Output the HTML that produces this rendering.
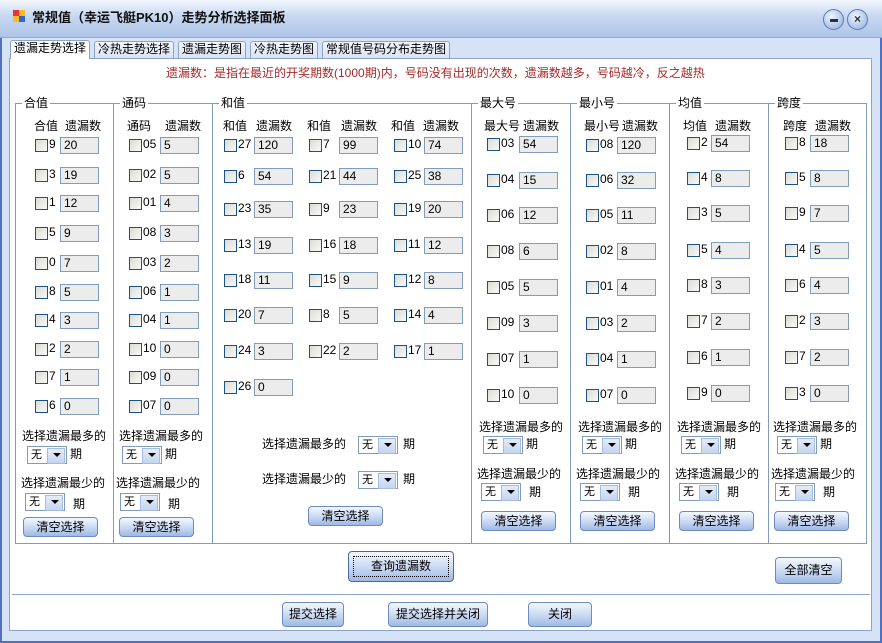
<!DOCTYPE html>
<html><head><meta charset="utf-8"><style>
*{margin:0;padding:0;box-sizing:border-box}
body{width:882px;height:643px;overflow:hidden;background:#d5e1f5;font-family:"Liberation Sans","Noto Sans CJK SC",sans-serif;font-size:12px;color:#000;position:relative}
.a{position:absolute;white-space:nowrap;line-height:14px}
#win{position:absolute;left:0;top:0;width:882px;height:643px;border:2px solid #4f71c0;border-top:none;background:#d6e2f6}
#title{position:absolute;left:0;top:0;width:882px;height:38px;background:linear-gradient(#f2f6fd,#c7d7f0 45%,#aec4e8);border-bottom:1px solid #8eaad8}
#panel{position:absolute;left:9px;top:58px;width:863px;height:573px;background:#fff;border:1px solid #8ba3c9}
.tab{position:absolute;top:41px;height:17px;border:1px solid #8ba3c9;border-bottom:none;background:linear-gradient(#f3f6fb,#d9e3f2);font-size:12px;line-height:15px;padding:0 3px;border-radius:3px 3px 0 0}
.g{position:absolute;top:103px;height:441px;border:1px solid #7f9db9}
.gt{position:absolute;top:-8px;left:6px;background:#fff;padding:0 2px;line-height:15px}
.r{position:absolute;height:17px}
.r i{position:absolute;left:0;top:2px;width:13px;height:13px;border:1px solid #1c5180;background:linear-gradient(135deg,#dcdcd6,#f8f8f6)}
.r b{position:absolute;left:14px;top:0;font-weight:normal;line-height:14px}
.r u{position:absolute;top:0;height:17px;text-decoration:none;border:1px solid #7f9db9;background:#ececec;padding-left:3px;line-height:15px;width:39px}
.dd{position:absolute;width:40px;height:18px;border:1px solid #7f9db9;background:#fff;font-size:11px;line-height:16px;padding-left:3px}
.dd:after{content:"";position:absolute;right:1px;top:1px;width:16px;height:14px;background:linear-gradient(#e4ecf9,#c4d5f1);border:1px solid #a6bbe0}
.dd:before{content:"";position:absolute;right:5px;top:6px;border:4px solid transparent;border-top:4px solid #000;z-index:2}
.bt{position:absolute;height:20px;border:1px solid #6e8bbf;border-radius:4px;background:linear-gradient(#f4f8fe,#c8d8f2 55%,#9fb9e3);text-align:center;line-height:18px}
.wb{position:absolute;top:9px;width:21px;height:21px;border-radius:50%;background:radial-gradient(circle at 40% 35%,#f0f5fd,#8fabdc);border:1px solid #5a7bbd;text-align:center;font-weight:bold;line-height:19px;color:#234}
</style></head><body>
<div id="win"></div>
<div id="title">
<div style="position:absolute;left:13px;top:10px;width:6px;height:6px;background:#e33"></div>
<div style="position:absolute;left:19px;top:10px;width:6px;height:6px;background:#fb2"></div>
<div style="position:absolute;left:13px;top:16px;width:6px;height:6px;background:#fb2"></div>
<div style="position:absolute;left:19px;top:16px;width:6px;height:6px;background:#36c"></div>
<div class="a" style="left:32px;top:11px;font-weight:bold;font-size:13px;color:#111">常规值（幸运飞艇PK10）走势分析选择面板</div>
<div class="wb" style="left:823px"><span style="position:absolute;left:6px;top:9px;width:8px;height:3px;background:#234"></span></div>
<div class="wb" style="left:847px">×</div>
</div>
<div class="tab" style="left:10px;top:40px;height:19px;background:#fff;z-index:2">遗漏走势选择</div>
<div class="tab" style="left:94px">冷热走势选择</div>
<div class="tab" style="left:178px">遗漏走势图</div>
<div class="tab" style="left:250px">冷热走势图</div>
<div class="tab" style="left:322px">常规值号码分布走势图</div>
<div id="panel"></div>
<div class="a" style="left:166px;top:66px;color:#a52a2a">遗漏数：是指在最近的开奖期数(1000期)内，号码没有出现的次数，遗漏数越多，号码越冷，反之越热</div>

<div class="g" style="left:15px;width:99px"><div class="gt">合值</div></div>
<div class="g" style="left:113px;width:100px"><div class="gt">通码</div></div>
<div class="g" style="left:212px;width:260px"><div class="gt">和值</div></div>
<div class="g" style="left:471px;width:100px"><div class="gt">最大号</div></div>
<div class="g" style="left:570px;width:100px"><div class="gt">最小号</div></div>
<div class="g" style="left:669px;width:100px"><div class="gt">均值</div></div>
<div class="g" style="left:768px;width:99px"><div class="gt">跨度</div></div>

<div class="a" style="left:34px;top:119px">合值</div><div class="a" style="left:65px;top:119px">遗漏数</div>
<div class="a" style="left:127px;top:119px">通码</div><div class="a" style="left:165px;top:119px">遗漏数</div>
<div class="a" style="left:223px;top:119px">和值</div><div class="a" style="left:256px;top:119px">遗漏数</div>
<div class="a" style="left:307px;top:119px">和值</div><div class="a" style="left:341px;top:119px">遗漏数</div>
<div class="a" style="left:391px;top:119px">和值</div><div class="a" style="left:423px;top:119px">遗漏数</div>
<div class="a" style="left:484px;top:119px">最大号</div><div class="a" style="left:523px;top:119px">遗漏数</div>
<div class="a" style="left:584px;top:119px">最小号</div><div class="a" style="left:622px;top:119px">遗漏数</div>
<div class="a" style="left:683px;top:119px">均值</div><div class="a" style="left:715px;top:119px">遗漏数</div>
<div class="a" style="left:783px;top:119px">跨度</div><div class="a" style="left:815px;top:119px">遗漏数</div>

<div class="r" style="left:35px;top:137px"><i></i><b>9</b><u style="left:25px">20</u></div>
<div class="r" style="left:35px;top:167px"><i></i><b>3</b><u style="left:25px">19</u></div>
<div class="r" style="left:35px;top:195px"><i></i><b>1</b><u style="left:25px">12</u></div>
<div class="r" style="left:35px;top:225px"><i></i><b>5</b><u style="left:25px">9</u></div>
<div class="r" style="left:35px;top:255px"><i></i><b>0</b><u style="left:25px">7</u></div>
<div class="r" style="left:35px;top:284px"><i></i><b>8</b><u style="left:25px">5</u></div>
<div class="r" style="left:35px;top:312px"><i></i><b>4</b><u style="left:25px">3</u></div>
<div class="r" style="left:35px;top:341px"><i></i><b>2</b><u style="left:25px">2</u></div>
<div class="r" style="left:35px;top:369px"><i></i><b>7</b><u style="left:25px">1</u></div>
<div class="r" style="left:35px;top:398px"><i></i><b>6</b><u style="left:25px">0</u></div>
<div class="r" style="left:129px;top:137px"><i></i><b>05</b><u style="left:31px">5</u></div>
<div class="r" style="left:129px;top:167px"><i></i><b>02</b><u style="left:31px">5</u></div>
<div class="r" style="left:129px;top:195px"><i></i><b>01</b><u style="left:31px">4</u></div>
<div class="r" style="left:129px;top:225px"><i></i><b>08</b><u style="left:31px">3</u></div>
<div class="r" style="left:129px;top:255px"><i></i><b>03</b><u style="left:31px">2</u></div>
<div class="r" style="left:129px;top:284px"><i></i><b>06</b><u style="left:31px">1</u></div>
<div class="r" style="left:129px;top:312px"><i></i><b>04</b><u style="left:31px">1</u></div>
<div class="r" style="left:129px;top:341px"><i></i><b>10</b><u style="left:31px">0</u></div>
<div class="r" style="left:129px;top:369px"><i></i><b>09</b><u style="left:31px">0</u></div>
<div class="r" style="left:129px;top:398px"><i></i><b>07</b><u style="left:31px">0</u></div>
<div class="r" style="left:224px;top:137px"><i></i><b>27</b><u style="left:30px">120</u></div>
<div class="r" style="left:224px;top:168px"><i></i><b>6</b><u style="left:30px">54</u></div>
<div class="r" style="left:224px;top:201px"><i></i><b>23</b><u style="left:30px">35</u></div>
<div class="r" style="left:224px;top:237px"><i></i><b>13</b><u style="left:30px">19</u></div>
<div class="r" style="left:224px;top:272px"><i></i><b>18</b><u style="left:30px">11</u></div>
<div class="r" style="left:224px;top:307px"><i></i><b>20</b><u style="left:30px">7</u></div>
<div class="r" style="left:224px;top:343px"><i></i><b>24</b><u style="left:30px">3</u></div>
<div class="r" style="left:224px;top:379px"><i></i><b>26</b><u style="left:30px">0</u></div>
<div class="r" style="left:309px;top:137px"><i></i><b>7</b><u style="left:30px">99</u></div>
<div class="r" style="left:309px;top:168px"><i></i><b>21</b><u style="left:30px">44</u></div>
<div class="r" style="left:309px;top:201px"><i></i><b>9</b><u style="left:30px">23</u></div>
<div class="r" style="left:309px;top:237px"><i></i><b>16</b><u style="left:30px">18</u></div>
<div class="r" style="left:309px;top:272px"><i></i><b>15</b><u style="left:30px">9</u></div>
<div class="r" style="left:309px;top:307px"><i></i><b>8</b><u style="left:30px">5</u></div>
<div class="r" style="left:309px;top:343px"><i></i><b>22</b><u style="left:30px">2</u></div>
<div class="r" style="left:394px;top:137px"><i></i><b>10</b><u style="left:30px">74</u></div>
<div class="r" style="left:394px;top:168px"><i></i><b>25</b><u style="left:30px">38</u></div>
<div class="r" style="left:394px;top:201px"><i></i><b>19</b><u style="left:30px">20</u></div>
<div class="r" style="left:394px;top:237px"><i></i><b>11</b><u style="left:30px">12</u></div>
<div class="r" style="left:394px;top:272px"><i></i><b>12</b><u style="left:30px">8</u></div>
<div class="r" style="left:394px;top:307px"><i></i><b>14</b><u style="left:30px">4</u></div>
<div class="r" style="left:394px;top:343px"><i></i><b>17</b><u style="left:30px">1</u></div>
<div class="r" style="left:487px;top:136px"><i></i><b>03</b><u style="left:32px">54</u></div>
<div class="r" style="left:487px;top:172px"><i></i><b>04</b><u style="left:32px">15</u></div>
<div class="r" style="left:487px;top:207px"><i></i><b>06</b><u style="left:32px">12</u></div>
<div class="r" style="left:487px;top:243px"><i></i><b>08</b><u style="left:32px">6</u></div>
<div class="r" style="left:487px;top:279px"><i></i><b>05</b><u style="left:32px">5</u></div>
<div class="r" style="left:487px;top:315px"><i></i><b>09</b><u style="left:32px">3</u></div>
<div class="r" style="left:487px;top:351px"><i></i><b>07</b><u style="left:32px">1</u></div>
<div class="r" style="left:487px;top:387px"><i></i><b>10</b><u style="left:32px">0</u></div>
<div class="r" style="left:586px;top:137px"><i></i><b>08</b><u style="left:31px">120</u></div>
<div class="r" style="left:586px;top:172px"><i></i><b>06</b><u style="left:31px">32</u></div>
<div class="r" style="left:586px;top:207px"><i></i><b>05</b><u style="left:31px">11</u></div>
<div class="r" style="left:586px;top:243px"><i></i><b>02</b><u style="left:31px">8</u></div>
<div class="r" style="left:586px;top:279px"><i></i><b>01</b><u style="left:31px">4</u></div>
<div class="r" style="left:586px;top:315px"><i></i><b>03</b><u style="left:31px">2</u></div>
<div class="r" style="left:586px;top:351px"><i></i><b>04</b><u style="left:31px">1</u></div>
<div class="r" style="left:586px;top:387px"><i></i><b>07</b><u style="left:31px">0</u></div>
<div class="r" style="left:687px;top:135px"><i></i><b>2</b><u style="left:24px">54</u></div>
<div class="r" style="left:687px;top:170px"><i></i><b>4</b><u style="left:24px">8</u></div>
<div class="r" style="left:687px;top:205px"><i></i><b>3</b><u style="left:24px">5</u></div>
<div class="r" style="left:687px;top:242px"><i></i><b>5</b><u style="left:24px">4</u></div>
<div class="r" style="left:687px;top:277px"><i></i><b>8</b><u style="left:24px">3</u></div>
<div class="r" style="left:687px;top:313px"><i></i><b>7</b><u style="left:24px">2</u></div>
<div class="r" style="left:687px;top:349px"><i></i><b>6</b><u style="left:24px">1</u></div>
<div class="r" style="left:687px;top:385px"><i></i><b>9</b><u style="left:24px">0</u></div>
<div class="r" style="left:785px;top:135px"><i></i><b>8</b><u style="left:25px">18</u></div>
<div class="r" style="left:785px;top:170px"><i></i><b>5</b><u style="left:25px">8</u></div>
<div class="r" style="left:785px;top:205px"><i></i><b>9</b><u style="left:25px">7</u></div>
<div class="r" style="left:785px;top:242px"><i></i><b>4</b><u style="left:25px">5</u></div>
<div class="r" style="left:785px;top:277px"><i></i><b>6</b><u style="left:25px">4</u></div>
<div class="r" style="left:785px;top:313px"><i></i><b>2</b><u style="left:25px">3</u></div>
<div class="r" style="left:785px;top:349px"><i></i><b>7</b><u style="left:25px">2</u></div>
<div class="r" style="left:785px;top:385px"><i></i><b>3</b><u style="left:25px">0</u></div>

<div class="a" style="left:22px;top:429px">选择遗漏最多的</div><div class="dd" style="left:27px;top:446px">无</div><div class="a" style="left:70px;top:447px">期</div>
<div class="a" style="left:21px;top:476px">选择遗漏最少的</div><div class="dd" style="left:25px;top:493px">无</div><div class="a" style="left:73px;top:497px">期</div>
<div class="bt" style="left:23px;top:517px;width:75px">清空选择</div>
<div class="a" style="left:119px;top:429px">选择遗漏最多的</div><div class="dd" style="left:122px;top:446px">无</div><div class="a" style="left:165px;top:447px">期</div>
<div class="a" style="left:116px;top:476px">选择遗漏最少的</div><div class="dd" style="left:120px;top:493px">无</div><div class="a" style="left:168px;top:497px">期</div>
<div class="bt" style="left:119px;top:517px;width:75px">清空选择</div>
<div class="a" style="left:262px;top:437px">选择遗漏最多的</div><div class="dd" style="left:358px;top:436px">无</div><div class="a" style="left:403px;top:437px">期</div>
<div class="a" style="left:262px;top:472px">选择遗漏最少的</div><div class="dd" style="left:358px;top:471px">无</div><div class="a" style="left:403px;top:472px">期</div>
<div class="bt" style="left:308px;top:506px;width:75px">清空选择</div>
<div class="a" style="left:479px;top:420px">选择遗漏最多的</div><div class="dd" style="left:483px;top:436px">无</div><div class="a" style="left:526px;top:437px">期</div>
<div class="a" style="left:477px;top:467px">选择遗漏最少的</div><div class="dd" style="left:481px;top:483px">无</div><div class="a" style="left:529px;top:485px">期</div>
<div class="bt" style="left:481px;top:511px;width:75px">清空选择</div>
<div class="a" style="left:578px;top:420px">选择遗漏最多的</div><div class="dd" style="left:582px;top:436px">无</div><div class="a" style="left:625px;top:437px">期</div>
<div class="a" style="left:576px;top:467px">选择遗漏最少的</div><div class="dd" style="left:580px;top:483px">无</div><div class="a" style="left:628px;top:485px">期</div>
<div class="bt" style="left:580px;top:511px;width:75px">清空选择</div>
<div class="a" style="left:677px;top:420px">选择遗漏最多的</div><div class="dd" style="left:681px;top:436px">无</div><div class="a" style="left:724px;top:437px">期</div>
<div class="a" style="left:675px;top:467px">选择遗漏最少的</div><div class="dd" style="left:679px;top:483px">无</div><div class="a" style="left:727px;top:485px">期</div>
<div class="bt" style="left:679px;top:511px;width:75px">清空选择</div>
<div class="a" style="left:773px;top:420px">选择遗漏最多的</div><div class="dd" style="left:777px;top:436px">无</div><div class="a" style="left:820px;top:437px">期</div>
<div class="a" style="left:771px;top:467px">选择遗漏最少的</div><div class="dd" style="left:775px;top:483px">无</div><div class="a" style="left:823px;top:485px">期</div>
<div class="bt" style="left:774px;top:511px;width:75px">清空选择</div>

<div class="bt" style="left:348px;top:551px;width:106px;height:31px;line-height:29px;border-color:#4d6a9c"><span style="display:block;position:absolute;left:4px;top:4px;right:4px;bottom:4px;border:1px dotted #000"></span>查询遗漏数</div>
<div class="bt" style="left:775px;top:557px;width:67px;height:27px;line-height:25px">全部清空</div>
<div style="position:absolute;left:12px;top:594px;width:858px;height:1px;background:#8ba3c9"></div>
<div class="bt" style="left:282px;top:602px;width:62px;height:25px;line-height:23px">提交选择</div>
<div class="bt" style="left:388px;top:602px;width:100px;height:25px;line-height:23px">提交选择并关闭</div>
<div class="bt" style="left:528px;top:602px;width:64px;height:25px;line-height:23px">关闭</div>
</body></html>
